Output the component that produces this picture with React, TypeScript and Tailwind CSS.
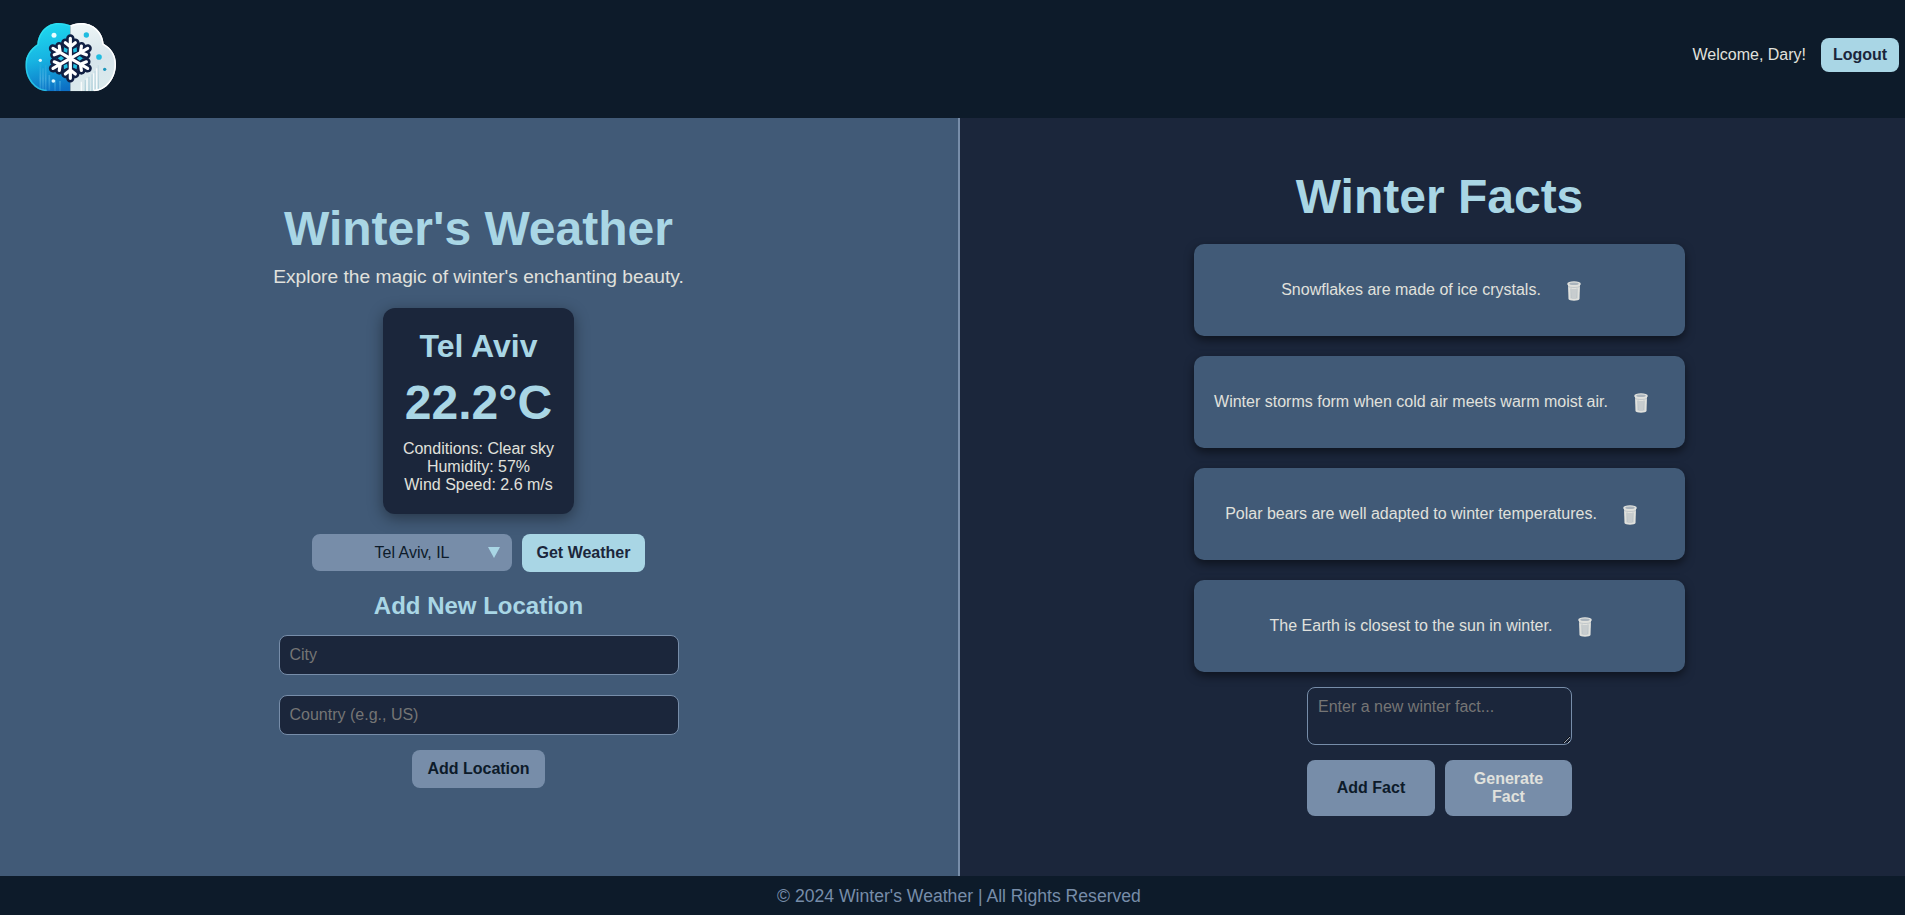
import React from "react";

const facts = [
  "Snowflakes are made of ice crystals.",
  "Winter storms form when cold air meets warm moist air.",
  "Polar bears are well adapted to winter temperatures.",
  "The Earth is closest to the sun in winter.",
];

const angles = [0, 60, 120, 180, 240, 300];

function FlakeArms() {
  return (
    <>
      {angles.map((a) => (
        <path key={a} transform={`rotate(${a} 151 130)`} d="M151 130V70M151 95L136 83M151 95L166 83" />
      ))}
    </>
  );
}

function Logo() {
  return (
    <svg className="h-[84px] w-[100px]" viewBox="0 0 300 252" fill="none">
      <defs>
        <linearGradient id="ice" x1="60" y1="25" x2="110" y2="228" gradientUnits="userSpaceOnUse">
          <stop offset="0" stopColor="#1fdcf0" />
          <stop offset="0.5" stopColor="#17b4e2" />
          <stop offset="1" stopColor="#0c6fc4" />
        </linearGradient>
        <linearGradient id="snow" x1="180" y1="25" x2="230" y2="228" gradientUnits="userSpaceOnUse">
          <stop offset="0" stopColor="#eef6f7" />
          <stop offset="0.55" stopColor="#d6e4eb" />
          <stop offset="1" stopColor="#dcebed" />
        </linearGradient>
        <linearGradient id="streak" x1="0" y1="140" x2="0" y2="225" gradientUnits="userSpaceOnUse">
          <stop offset="0" stopColor="#6cc8ee" stopOpacity="0" />
          <stop offset="0.6" stopColor="#6cc8ee" stopOpacity="0.5" />
          <stop offset="1" stopColor="#6cc8ee" stopOpacity="0.2" />
        </linearGradient>
        <linearGradient id="drip" x1="0" y1="140" x2="0" y2="228" gradientUnits="userSpaceOnUse">
          <stop offset="0" stopColor="#8dbccd" stopOpacity="0.1" />
          <stop offset="1" stopColor="#8dbccd" stopOpacity="0.6" />
        </linearGradient>
        <clipPath id="cloud">
          <path d="M80 229C44 227 16 192 16 150C16 122 32 101 52 88C55 51 81 24 115 24C130 24 142 27 151 31C160 27 170 24 184 24C219 24 248 50 251 86C273 98 288 119 288 147C288 190 260 227 222 229Z" />
        </clipPath>
      </defs>
      <g clipPath="url(#cloud)">
        <rect width="151" height="252" fill="url(#ice)" />
        <rect x="151" width="149" height="252" fill="url(#snow)" />
        <path d="M61 145V225M69 160V225M77 150V225M88 180V225M105 195V228M120 198V228" stroke="url(#streak)" strokeWidth="5" />
        <path d="M207 185V228M216 178V228M225 168V228M235 150V228M196 195V228" stroke="url(#drip)" strokeWidth="4" />
        <path d="M184 200V229M201 190V229M221 175V225M230 160V222" stroke="#ffffff" strokeWidth="4" strokeOpacity="0.8" />
        <path d="M80 229C44 227 16 192 16 150C16 122 32 101 52 88C55 51 81 24 115 24C130 24 142 27 151 31" stroke="#35e3f2" strokeWidth="9" strokeOpacity="0.6" />
        <path d="M151 31C160 27 170 24 184 24C219 24 248 50 251 86C273 98 288 119 288 147C288 190 260 227 222 229" stroke="#ffffff" strokeWidth="9" />
      </g>
      <circle cx="102" cy="61" r="7.5" fill="#e9fdff" />
      <circle cx="61" cy="136" r="5" fill="#d8f6ff" />
      <circle cx="100" cy="198" r="5.5" fill="#d8f6ff" />
      <circle cx="199" cy="60" r="8" fill="#1fbce0" />
      <circle cx="237" cy="126" r="8.5" fill="#1fbce0" />
      <circle cx="254" cy="163" r="5" fill="#1d96bd" />
      <g stroke="#111f43" strokeWidth="25" strokeLinecap="round" strokeLinejoin="round">
        <FlakeArms />
      </g>
      <circle cx="151" cy="130" r="40" fill="#111f43" />
      <g fill="#20bfe0">
        {angles.map((a) => (
          <path key={a} transform={`rotate(${a + 30} 151 130)`} d="M151 111L144 102L151 92L158 102Z" />
        ))}
      </g>
      <g stroke="#ffffff" strokeWidth="9.5" strokeLinecap="round" strokeLinejoin="round">
        <FlakeArms />
      </g>
    </svg>
  );
}

function Trash() {
  return (
    <svg className="mt-[2px] h-5 w-[14px]" viewBox="0 0 14 20" fill="none">
      <path d="M1 4L1.5 18C1.8 20.2 12.2 20.2 12.5 18L13 4Z" fill="#e0e1dd" />
      <ellipse cx="7" cy="3" rx="6.8" ry="2.7" fill="#e0e1dd" />
      <ellipse cx="7" cy="2.8" rx="4.8" ry="1.2" fill="#a9b3bc" />
      <path d="M1 5.4C3 6.8 11 6.8 13 5.4" stroke="#aab4bc" strokeWidth="0.6" />
      <path d="M4 7.5L4.2 17.5M6 8V18M8 8V18M10 7.5L9.8 17.5" stroke="#9aa7b3" strokeWidth="0.7" />
    </svg>
  );
}

export default function App() {
  return (
    <div className="flex h-[915px] w-full flex-col overflow-hidden bg-[#0d1b2a] font-['Liberation_Sans',Arial,sans-serif] text-base leading-[18px] text-[#e0e1dd]">
      <header className="flex h-[118px] shrink-0 items-start justify-between pl-5 pr-1.5">
        <div className="pt-[15px]">
          <Logo />
        </div>
        <div className="flex items-center gap-[15px] pt-[38px]">
          <span>Welcome, Dary!</span>
          <button className="h-[34px] w-[78px] rounded-lg bg-[#a9d6e5] font-bold text-[#1b263b]">Logout</button>
        </div>
      </header>

      <main className="flex h-[758px] shrink-0">
        <section className="flex w-[960px] shrink-0 flex-col items-center border-r-2 border-[#778da9] bg-[#415a77] pt-[83px] pr-px">
          <h1 className="text-5xl leading-[55px] font-bold text-[#a9d6e5]">Winter's Weather</h1>
          <p className="mt-2.5 text-[19.2px] leading-[22px]">Explore the magic of winter's enchanting beauty.</p>

          <div className="mt-5 flex h-[206px] w-[191px] flex-col items-center rounded-xl bg-[#1b263b] pt-5 text-center whitespace-nowrap shadow-[0_4px_15px_rgba(0,0,0,0.4)]">
            <h2 className="text-[32px] leading-[37px] font-bold text-[#a9d6e5]">Tel Aviv</h2>
            <p className="mt-2.5 text-5xl leading-[55px] font-bold text-[#a9d6e5]">22.2°C</p>
            <div className="mt-2.5">
              <p>Conditions: Clear sky</p>
              <p>Humidity: 57%</p>
              <p>Wind Speed: 2.6 m/s</p>
            </div>
          </div>

          <div className="mt-5 flex items-start gap-2.5">
            <div className="grid h-[37px] w-[200px] grid-cols-[38px_1fr_38px] items-center rounded-lg bg-[#778da9] text-[#0d1b2a]">
              <span />
              <span className="text-center">Tel Aviv, IL</span>
              <svg className="ml-[14px] h-[11px] w-3" viewBox="0 0 12 11">
                <path d="M0 0H12L6 11Z" fill="#a9d6e5" />
              </svg>
            </div>
            <button className="h-[38px] w-[123px] rounded-lg bg-[#a9d6e5] font-bold text-[#1b263b]">Get Weather</button>
          </div>

          <h3 className="mt-5 text-2xl leading-[28px] font-bold text-[#a9d6e5]">Add New Location</h3>
          <input
            className="mt-[15px] h-10 w-[400px] rounded-lg border border-[#778da9] bg-[#1b263b] px-2.5 placeholder:text-[#757575]"
            placeholder="City"
          />
          <input
            className="mt-5 h-10 w-[400px] rounded-lg border border-[#778da9] bg-[#1b263b] px-2.5 placeholder:text-[#757575]"
            placeholder="Country (e.g., US)"
          />
          <button className="mt-[15px] h-[38px] w-[133px] rounded-lg bg-[#778da9] font-bold text-[#0d1b2a]">Add Location</button>
        </section>

        <section className="flex grow flex-col items-center bg-[#1b263b] pt-[51px] pl-[14px]">
          <h1 className="text-5xl leading-[55px] font-bold text-[#a9d6e5]">Winter Facts</h1>
          <ul className="mt-5 flex w-[491px] flex-col gap-5">
            {facts.map((fact) => (
              <li
                key={fact}
                className="flex h-[92px] items-center justify-center rounded-[10px] bg-[#415a77] shadow-[0_4px_10px_rgba(0,0,0,0.5)]"
              >
                <span>{fact}</span>
                <button className="pr-[17px] pl-[26px]">
                  <Trash />
                </button>
              </li>
            ))}
          </ul>
          <div className="mt-[15px] flex w-[265px] flex-col gap-[15px]">
            <textarea
              className="block h-[58px] w-full resize rounded-lg border border-[#778da9] bg-[#1b263b] p-2.5 placeholder:text-[#757575]"
              placeholder="Enter a new winter fact..."
            />
            <div className="flex h-14 gap-2.5">
              <button className="w-32 rounded-lg bg-[#778da9] font-bold text-[#0d1b2a]">Add Fact</button>
              <button className="w-[127px] rounded-lg bg-[#778da9] px-5 font-bold text-[#e0e1dd]">Generate Fact</button>
            </div>
          </div>
        </section>
      </main>

      <footer className="flex h-[39px] shrink-0 items-center justify-center pl-[13px] text-[17.6px] leading-5 text-[#778da9]">
        © 2024 Winter's Weather | All Rights Reserved
      </footer>
    </div>
  );
}
